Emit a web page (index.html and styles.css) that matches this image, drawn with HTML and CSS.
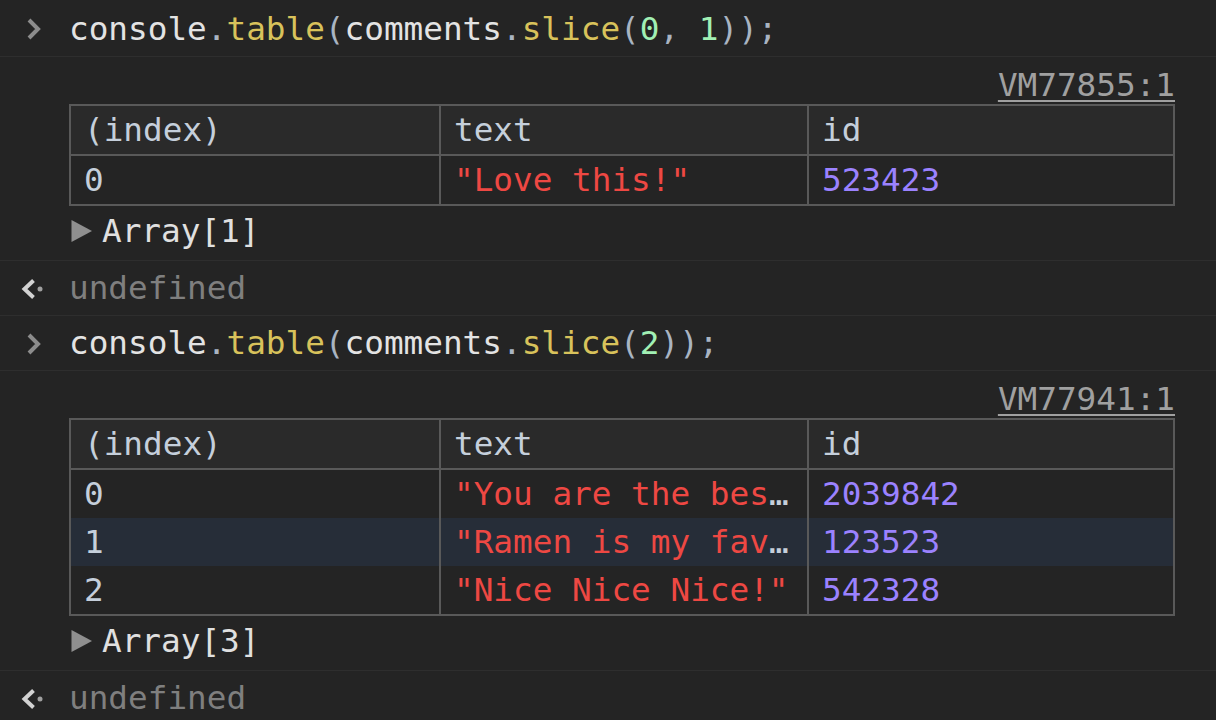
FILE: index.html
```html
<!DOCTYPE html>
<html>
<head>
<meta charset="utf-8">
<link rel="stylesheet" href="styles.css">
</head>
<body>
<div class="console">
  <div class="msg msg-first">
    <svg class="icon prompt" width="24" height="28" viewBox="0 0 24 28"><path d="M7 6 L16 15 L7 24" fill="none" stroke="#8c8c8c" stroke-width="4"/></svg>
    <div class="code"><span class="w">console</span><span class="p">.</span><span class="y">table</span><span class="p">(</span><span class="w">comments</span><span class="p">.</span><span class="y">slice</span><span class="p">(</span><span class="g">0</span><span class="p">, </span><span class="g">1</span><span class="p">));</span></div>
  </div>

  <div class="msg out">
    <div class="src"><a class="link">VM77855:1</a></div>
    <table class="tbl">
      <tr class="hd"><td>(index)</td><td>text</td><td>id</td></tr>
      <tr><td class="ix">0</td><td class="s">"Love this!"</td><td class="n">523423</td></tr>
    </table>
    <div class="arr"><svg class="tri" width="22" height="24" viewBox="0 0 22 24"><path d="M0.5 1 L21 12 L0.5 23 Z" fill="#8f8f8f"/></svg><span>Array[1]</span></div>
  </div>

  <div class="msg">
    <svg class="icon result" width="26" height="28" viewBox="0 0 26 28"><path d="M15.5 6.5 L6.5 15 L15.5 23.5" fill="none" stroke="#d2d2d2" stroke-width="4"/><circle cx="22" cy="15" r="2.5" fill="#a0a0a0"/></svg>
    <div class="code undef">undefined</div>
  </div>

  <div class="msg">
    <svg class="icon prompt" width="24" height="28" viewBox="0 0 24 28"><path d="M7 6 L16 15 L7 24" fill="none" stroke="#8c8c8c" stroke-width="4"/></svg>
    <div class="code"><span class="w">console</span><span class="p">.</span><span class="y">table</span><span class="p">(</span><span class="w">comments</span><span class="p">.</span><span class="y">slice</span><span class="p">(</span><span class="g">2</span><span class="p">));</span></div>
  </div>

  <div class="msg out">
    <div class="src"><a class="link">VM77941:1</a></div>
    <table class="tbl">
      <tr class="hd"><td>(index)</td><td>text</td><td>id</td></tr>
      <tr><td class="ix">0</td><td class="s">"You are the bes<span class="ell">…</span></td><td class="n">2039842</td></tr>
      <tr class="hl"><td class="ix">1</td><td class="s">"Ramen is my fav<span class="ell">…</span></td><td class="n">123523</td></tr>
      <tr><td class="ix">2</td><td class="s">"Nice Nice Nice!"</td><td class="n">542328</td></tr>
    </table>
    <div class="arr"><svg class="tri" width="22" height="24" viewBox="0 0 22 24"><path d="M0.5 1 L21 12 L0.5 23 Z" fill="#8f8f8f"/></svg><span>Array[3]</span></div>
  </div>

  <div class="msg last">
    <svg class="icon result" width="26" height="28" viewBox="0 0 26 28"><path d="M15.5 6.5 L6.5 15 L15.5 23.5" fill="none" stroke="#d2d2d2" stroke-width="4"/><circle cx="22" cy="15" r="2.5" fill="#a0a0a0"/></svg>
    <div class="code undef">undefined</div>
  </div>
</div>
</body>
</html>
```

FILE: styles.css
```css
html, body {
  margin: 0;
  padding: 0;
  background: #242424;
}
body {
  width: 1216px;
  height: 720px;
  overflow: hidden;
  font-family: "DejaVu Sans Mono", "Liberation Mono", monospace;
  font-size: 32.7px;
  color: #e0e0e0;
}
.console {
  display: flex;
  flex-direction: column;
}
.msg {
  position: relative;
  display: flex;
  align-items: center;
  padding: 8px 41px 8px 69px;
  line-height: 38px;
  border-bottom: 1px solid #2e2e2e;
}
.msg-first {
  padding-top: 10px;
}
.msg.out {
  flex-direction: column;
  align-items: stretch;
  padding-top: 9px;
  padding-bottom: 10px;
}
.icon {
  position: absolute;
  top: 50%;
  margin-top: -14px;
}
.icon.prompt { left: 22px; }
.icon.result { left: 18px; }
.code {
  white-space: pre;
}
.w { color: #e3e3e3; }
.p { color: #a9b4c2; }
.y { color: #d8c25b; }
.g { color: #a1f0b4; }
.undef { color: #7f7f7f; }
.src {
  display: flex;
  justify-content: flex-end;
}
.link {
  color: #a0a0a0;
  text-decoration: underline;
  text-underline-offset: 4px;
  text-decoration-thickness: 2px;
}
.tbl {
  border-collapse: collapse;
  width: 100%;
  table-layout: fixed;
  border: 2px solid #595959;
}
.tbl td {
  border: 2px solid #595959;
  height: 48px;
  padding: 0 13px;
  white-space: pre;
  overflow: hidden;
  line-height: 38px;
  vertical-align: middle;
}
.tbl td:nth-child(1) { width: 342px; }
.tbl td:nth-child(2) { width: 340px; }
.tbl tr:not(.hd) td {
  border-top: none;
  border-bottom: none;
}
.hd td {
  background: #2a2a2a;
  color: #c5cfdb;
}
.hl td { background: #262d38; }
.ix { color: #c5cfdb; }
.s { color: #ee4843; }
.n { color: #9b82ff; }
.ell { color: #c5cfdb; }
.arr {
  display: flex;
  align-items: center;
  margin-top: 6px;
}
.tri {
  margin-left: 2px;
  margin-right: 9px;
}
```
